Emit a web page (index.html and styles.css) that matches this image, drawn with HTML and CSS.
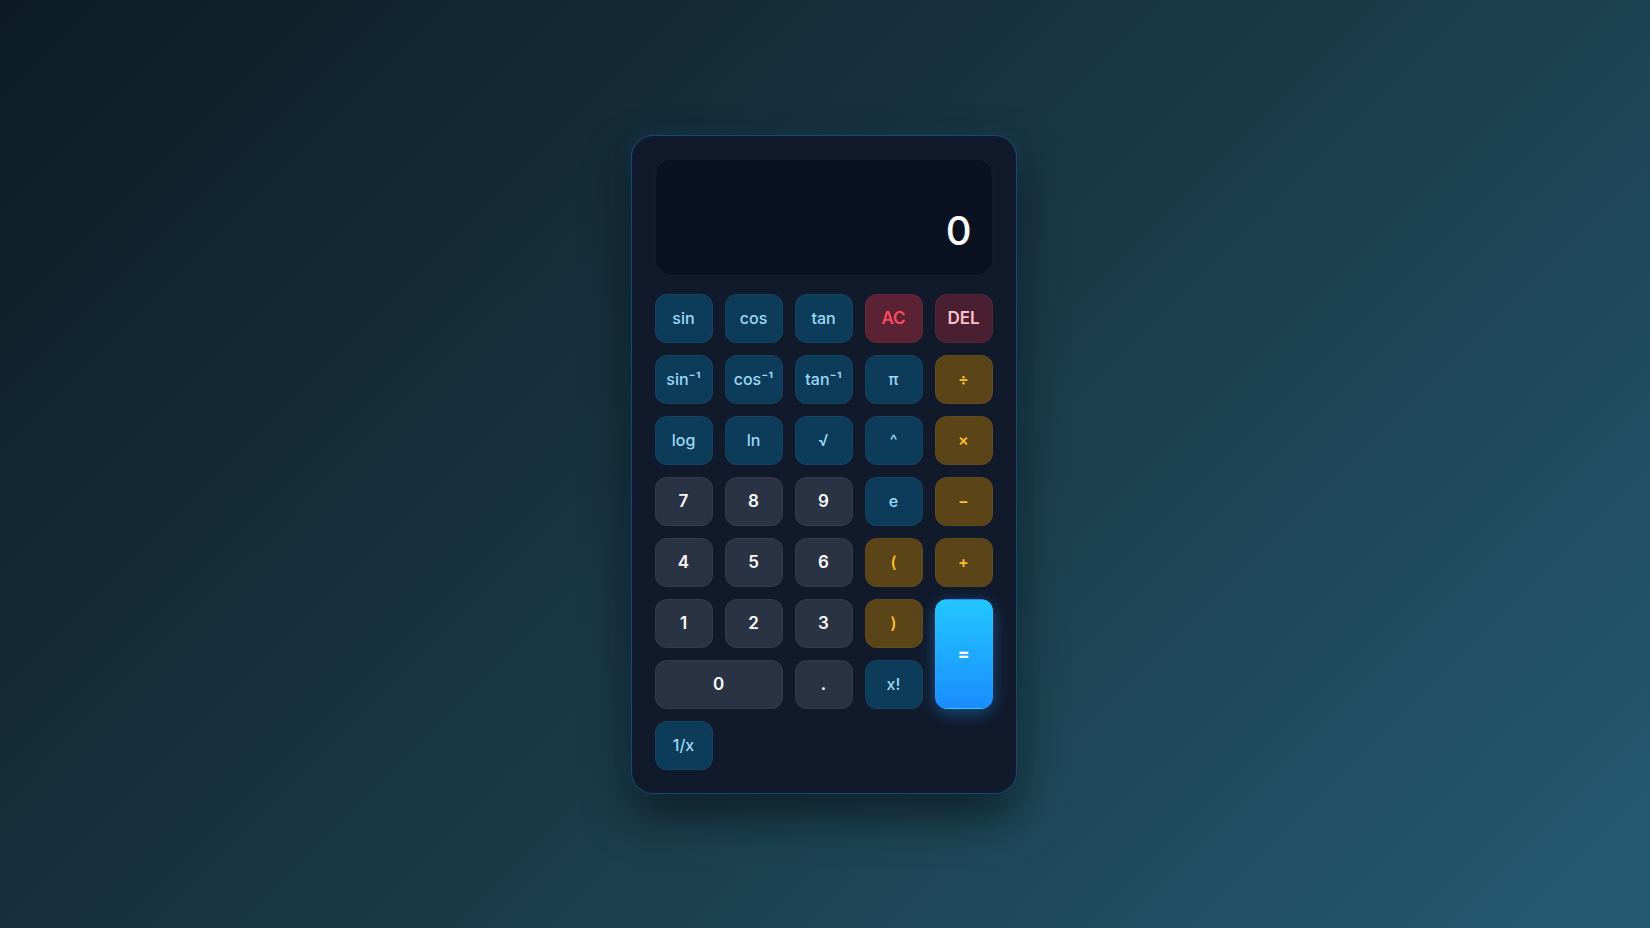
FILE: index.html
```html
<!DOCTYPE html>
<html lang="en">
<head>
<meta charset="utf-8">
<title>Calculator</title>
<link rel="stylesheet" href="styles.css">
</head>
<body>
<main class="stage">
  <div class="calc">
    <div class="display">
      <div class="expr"></div>
      <div class="result">0</div>
    </div>
    <div class="keys">
      <button class="key fn">sin</button>
      <button class="key fn">cos</button>
      <button class="key fn">tan</button>
      <button class="key ac">AC</button>
      <button class="key del">DEL</button>

      <button class="key fn">sin⁻¹</button>
      <button class="key fn">cos⁻¹</button>
      <button class="key fn">tan⁻¹</button>
      <button class="key fn">π</button>
      <button class="key op">÷</button>

      <button class="key fn">log</button>
      <button class="key fn">ln</button>
      <button class="key fn">√</button>
      <button class="key fn">^</button>
      <button class="key op">×</button>

      <button class="key num">7</button>
      <button class="key num">8</button>
      <button class="key num">9</button>
      <button class="key fn">e</button>
      <button class="key op">−</button>

      <button class="key num">4</button>
      <button class="key num">5</button>
      <button class="key num">6</button>
      <button class="key op">(</button>
      <button class="key op">+</button>

      <button class="key num">1</button>
      <button class="key num">2</button>
      <button class="key num">3</button>
      <button class="key op">)</button>
      <button class="key eq">=</button>

      <button class="key num zero">0</button>
      <button class="key num">.</button>
      <button class="key fn">x!</button>

      <button class="key fn">1/x</button>
    </div>
  </div>
</main>
</body>
</html>
```

FILE: styles.css
```css
* { box-sizing: border-box; }

html, body {
  margin: 0;
  height: 100%;
}

body {
  background: linear-gradient(135deg, #0c1b24 0%, #1a3846 50%, #245b72 100%);
  font-family: "Inter", "Noto Sans", "Liberation Sans", sans-serif;
  overflow: hidden;
}

.stage {
  height: 100%;
  display: flex;
  align-items: center;
  justify-content: center;
  padding-right: 3px;
}

.calc {
  width: 386px;
  padding: 23px;
  background: #111a2b;
  border: 1px solid rgba(56, 170, 220, 0.32);
  border-radius: 22px;
  box-shadow: 0 22px 45px rgba(0, 0, 0, 0.5), 0 0 18px rgba(20, 120, 170, 0.2);
  display: flex;
  flex-direction: column;
  gap: 18px;
}

.display {
  height: 117px;
  background: #0a1120;
  border: 1px solid rgba(255, 255, 255, 0.05);
  border-radius: 16px;
  padding: 16px 20px 20px;
  display: flex;
  flex-direction: column;
  justify-content: flex-end;
  align-items: flex-end;
}

.expr {
  min-height: 18px;
  color: #64748b;
  font-size: 14px;
}

.result {
  color: #ffffff;
  font-size: 40px;
  font-weight: 500;
  line-height: 1.2;
}

.keys {
  display: grid;
  grid-template-columns: repeat(5, 1fr);
  grid-auto-rows: 49px;
  gap: 12px;
}

.key {
  border: 1px solid rgba(255, 255, 255, 0.04);
  border-radius: 12px;
  font-family: inherit;
  font-size: 16px;
  font-weight: 500;
  padding: 0;
  display: flex;
  align-items: center;
  justify-content: center;
}

.fn {
  background: #0d3c5a;
  color: #9ad9f6;
}

.num {
  background: #2a3344;
  color: #f8fafc;
  font-weight: 600;
  font-size: 17px;
}

.op {
  background: #5a4418;
  color: #fbbf24;
  font-weight: 600;
}

.ac {
  background: #5a2233;
  color: #fb4b5e;
  font-weight: 600;
  font-size: 17px;
}

.del {
  background: #4a1f31;
  color: #fcc0c8;
  font-weight: 600;
  font-size: 17px;
}

.eq {
  grid-row: span 2;
  background: linear-gradient(180deg, #22c6ff 0%, #1a8dff 100%);
  color: #ffffff;
  font-weight: 700;
  font-size: 18px;
  box-shadow: 0 4px 16px rgba(30, 150, 255, 0.4);
}

.zero {
  grid-column: span 2;
}
```
